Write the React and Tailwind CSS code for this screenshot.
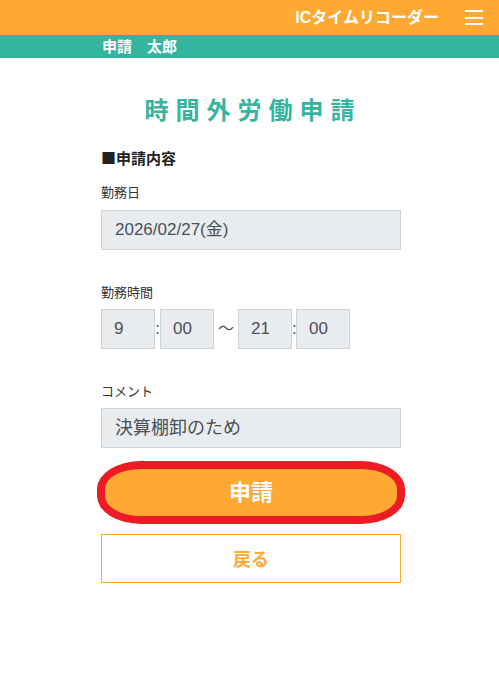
import React from "react";

const FONT = { fontFamily: '"Liberation Sans", "Noto Sans CJK JP", sans-serif' };
const CJK = { fontFamily: '"Noto Sans CJK JP", sans-serif' };

function TimeBox({ value }) {
  return (
    <div className="w-[54px] h-10 bg-[#e9ecef] border border-[#ced4da] text-[#495057] text-[17px] flex items-center pl-[12px]">
      {value}
    </div>
  );
}

export default function App() {
  return (
    <div className="min-h-[677px] bg-white" style={FONT}>
      {/* header */}
      <div className="h-[35px] bg-[#ffa932] flex items-center justify-end pr-[16px]">
        <span className="text-white font-bold text-[16px] leading-none">ICタイムリコーダー</span>
        <button className="ml-[26px] w-[18px] h-[15px] flex flex-col justify-between" aria-label="menu">
          <span className="block h-[2px] w-full bg-white" />
          <span className="block h-[2px] w-full bg-white" />
          <span className="block h-[2px] w-full bg-white" />
        </button>
      </div>
      <div className="h-[23px] bg-[#35b4a0] flex items-center pl-[102px]">
        <span className="text-white font-semibold text-[15px] leading-none">申請　太郎</span>
      </div>

      <div className="w-[300px] ml-[101px]">
        <h1 className="mt-[37px] text-center text-[24px] leading-[32px] font-bold text-[#35b4a0] tracking-[7px] pl-[4px]">
          時間外労働申請
        </h1>

        <div className="mt-[21px] text-[15px] leading-[20px] font-bold text-[#222]" style={CJK}>■申請内容</div>

        <div className="mt-[17px] text-[13px] leading-[16px] text-[#333]">勤務日</div>
        <div className="mt-[9px] h-10 bg-[#e9ecef] border border-[#ced4da] text-[#495057] text-[17px] flex items-center pl-[13px]">
          2026/02/27(金)
        </div>

        <div className="mt-[35px] text-[13px] leading-[16px] text-[#333]">勤務時間</div>
        <div className="mt-[8px] flex items-center text-[#495057]">
          <TimeBox value="9" />
          <span className="w-[5px] text-center text-[17px]">:</span>
          <TimeBox value="00" />
          <span className="w-[24px] text-center text-[16px]">〜</span>
          <TimeBox value="21" />
          <span className="w-[4px] text-center text-[17px]">:</span>
          <TimeBox value="00" />
        </div>

        <div className="mt-[35px] text-[13px] leading-[16px] text-[#333]">コメント</div>
        <div className="mt-[8px] h-10 bg-[#e9ecef] border border-[#ced4da] text-[#495057] text-[18px] flex items-center pl-[13px]">
          決算棚卸のため
        </div>

        <button className="mt-[13px] -ml-[4px] w-[308px] h-[63px] bg-[#ffa932] border-[8px] border-[#ed1c24] rounded-[44px/28px] flex items-center justify-center">
          <span className="text-white font-bold text-[22px] leading-none">申請</span>
        </button>

        <button className="mt-[10px] w-[300px] h-[49px] bg-white border border-[#ffa932] flex items-center justify-center pt-[3px]">
          <span className="text-[#ffa932] font-bold text-[18px] leading-none">戻る</span>
        </button>
      </div>
    </div>
  );
}
